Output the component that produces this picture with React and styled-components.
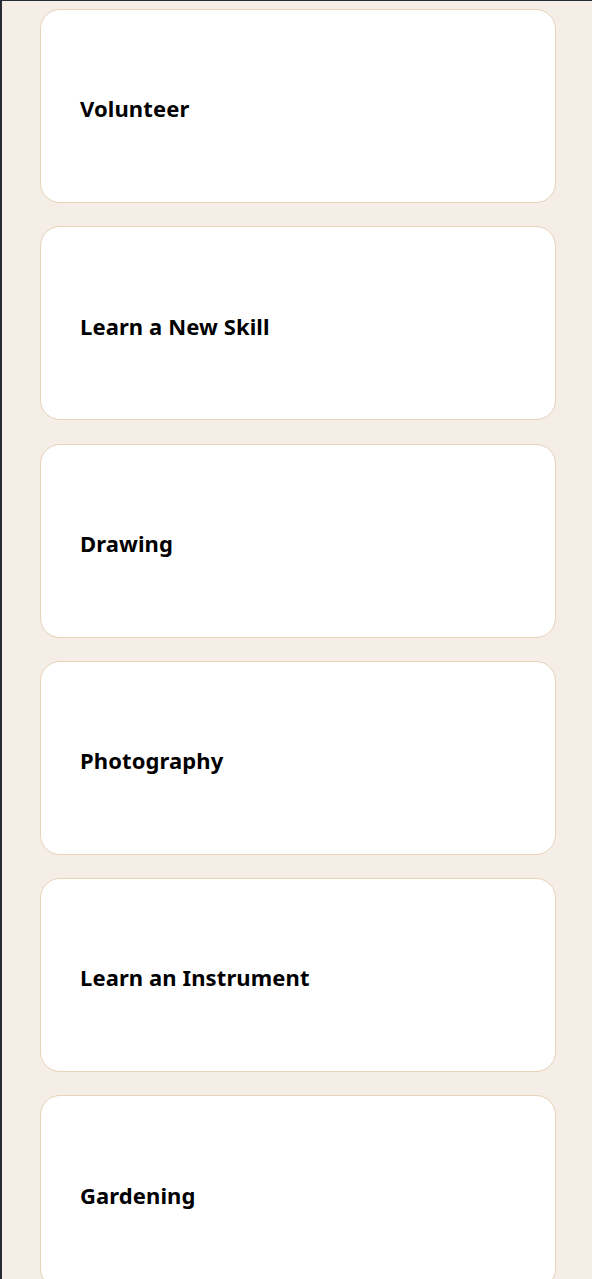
import React from "react";
import styled, { createGlobalStyle } from "styled-components";

const GlobalStyle = createGlobalStyle`
  html, body {
    margin: 0;
    padding: 0;
    background: #262b36;
  }
  body {
    font-family: "Noto Sans", "Open Sans", sans-serif;
  }
`;

const Page = styled.div`
  margin: 1px 0 0 2px;
  background: #f5eee6;
  min-height: 1278px;
  padding: 8px 36px 0 38px;
  box-sizing: border-box;
  display: flex;
  flex-direction: column;
  gap: 23.3px;
`;

const Card = styled.div`
  box-sizing: border-box;
  height: 194px;
  flex-shrink: 0;
  background: #fff;
  border: 1px solid #e8d2b8;
  border-radius: 20px;
  display: flex;
  align-items: center;
  padding: 5px 39px 0;
`;

const Title = styled.h2`
  margin: 0;
  font-size: 22px;
  font-weight: 700;
  color: #000;
  line-height: 1.3;
  letter-spacing: 0.1px;
`;

const activities = [
  "Volunteer",
  "Learn a New Skill",
  "Drawing",
  "Photography",
  "Learn an Instrument",
  "Gardening",
];

const App = () => (
  <>
    <GlobalStyle />
    <Page>
      {activities.map((name) => (
        <Card key={name}>
          <Title>{name}</Title>
        </Card>
      ))}
    </Page>
  </>
);

export default App;
